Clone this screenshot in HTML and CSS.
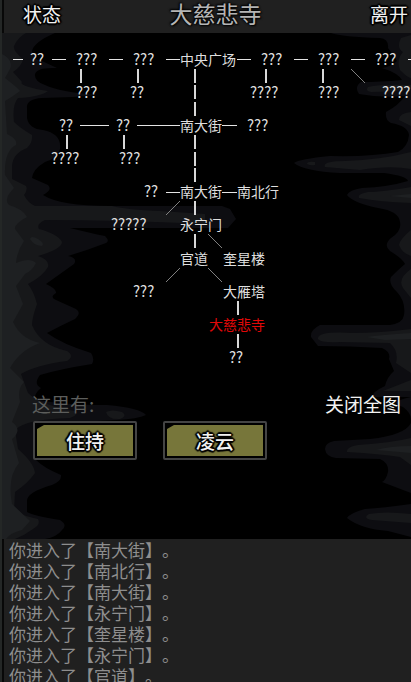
FILE: index.html
```html
<!DOCTYPE html>
<html lang="zh-CN">
<head>
    <meta charset="UTF-8">
    <meta name="viewport" content="width=device-width, initial-scale=1">
    <title>大慈悲寺</title>
    <link rel="stylesheet" href="styles.css">
</head>
<body>
    <header class="top-bar">
        <button class="text-button outlined">状态</button>
        <h1 class="place-name">大慈悲寺</h1>
        <button class="text-button outlined">离开</button>
    </header>

    <main class="scene">
        <!-- 左侧墨迹 -->
        <svg class="ink ink-left" width="240" height="506" viewBox="0 33 240 506" aria-hidden="true">
            <path class="ink-outer" d="M0 33H55Q34 42 32 51Q33 60 42 61L57 68Q37 67 35 74Q34 81 45 85Q60 92 97 95Q70 98 42 98Q26 99 27 108V118Q29 129 43 130Q62 134 60 149Q58 158 45 162Q33 169 32 178L48 185Q53 190 43 195Q60 206 110 206H222L230 209L236 219L228 228H70Q90 233 105 236Q110 241 106 243Q88 250 68 256Q78 258 74 264Q60 274 46 284Q57 289 56 293Q49 297 56 300L76 309Q82 313 75 319Q60 326 47 333Q62 344 91 353Q95 359 92 364Q60 369 40 375Q33 384 41 388Q34 394 35 399Q60 405 107 405Q140 408 146 415Q138 419 117 420Q50 422 37 432Q30 450 36 460Q44 468 61 475Q62 481 52 485Q27 492 27 501V512Q34 516 60 520Q68 525 62 530Q57 537 45 539H0Z"/>
            <path class="ink-mid" d="M0 33H26Q18 37 14 46Q13 51 23 59Q22 66 13 72L22 82Q18 86 48 91Q40 97 18 98Q12 105 14 122Q20 128 32 135Q33 142 27 148Q13 153 12 166V179L26 186Q28 190 24 195Q28 203 35 206H112Q128 210 160 211L205 214V224Q120 220 45 220Q36 224 39 229Q58 234 62 242Q62 249 38 256Q50 260 48 267Q43 276 28 284Q34 292 37 304Q32 318 32 325Q40 345 67 351Q75 356 67 361Q36 365 21 374L28 393Q40 405 75 411Q79 415 70 418Q25 419 15 430L18 449Q34 463 35 473Q28 483 15 492L14 512Q28 517 38 519Q41 525 33 529Q25 535 15 539H0Z"/>
            <path class="ink-inner" d="M0 53Q14 59 10 69L5 78Q19 89 20 91Q12 97 5 101L7 134Q18 139 16 145Q4 151 5 175L14 188Q3 199 9 205Q23 209 27 217Q14 224 15 229L24 241Q17 251 16 263Q30 257 36 263Q32 271 25 274L16 286L23 304L13 322Q21 339 40 343Q20 350 10 368L24 382Q17 389 20 402L12 422Q23 430 12 439L19 463Q7 477 12 504L30 521L22 530Q10 533 6 539H0Z"/>
            <path class="ink-inner" d="M30 239Q31 235 38 239Q45 243 42 246Q34 246 30 239Z"/>
            <path class="ink-mid" d="M106 412Q112 409 122 412Q128 416 120 419Q108 420 106 412Z"/>
            <path class="ink-edge" d="M0 33H2V539H0Z"/>
        </svg>
        <!-- 右侧墨迹 -->
        <svg class="ink ink-right" width="121" height="506" viewBox="290 33 121 506" aria-hidden="true">
            <path class="ink-outer" d="M411 33H331Q342 37 380 38Q389 39 388 48Q393 54 397 61Q390 67 382 68Q398 73 402 80Q380 82 361 82Q354 87 359 94Q380 98 405 96Q399 105 386 112Q385 120 391 123Q408 126 409 135Q408 147 398 152Q370 157 330 156Q299 159 294 163Q304 171 340 173H384Q407 176 408 181Q388 187 362 188Q349 190 347 195Q353 203 378 208Q399 211 400 222Q402 231 391 238Q383 245 390 251Q403 259 405 264Q399 269 391 277Q388 284 397 292Q406 302 404 315Q403 323 390 325H320Q310 330 311 337L318 346Q350 346 382 348Q391 352 389 359L394 371Q387 377 385 386Q372 392 372 397H411Z"/>
            <path class="ink-outer" d="M411 397Q387 402 403 407Q411 413 411 419ZM411 423Q405 435 370 439L334 441Q325 443 325 449Q326 457 336 458L380 459Q389 463 388 472Q386 480 382 482L411 493ZM411 504Q383 508 365 509Q350 513 347 518Q361 529 388 531L411 537Z"/>
            <path class="ink-mid" d="M411 35L401 38Q396 48 403 52Q396 60 400 70Q408 78 411 78ZM411 85Q380 84 368 87Q365 91 371 92Q390 92 411 89ZM411 112Q399 113 399 120L411 126ZM411 152Q380 160 345 161Q322 161 325 167L360 170Q390 165 411 169ZM411 187Q382 192 368 192Q357 194 359 198Q380 202 411 203ZM411 230Q400 239 399 245Q402 253 411 256ZM411 269Q397 279 403 288L411 298ZM411 329Q380 333 352 333Q317 331 318 339Q321 343 340 342L390 343Q399 351 396 363L411 373ZM411 380L383 391L411 391ZM411 438Q390 443 358 445Q346 447 347 452Q380 454 400 457L411 465ZM411 514Q385 511 369 514Q362 518 372 520L411 523Z"/>
            <path class="ink-inner" d="M411 194L390 196L411 198ZM411 333Q380 335 367 337L385 340L411 339ZM411 446Q390 446 376 450L411 453Z"/>
            <path class="ink-mid" d="M315 162Q307 161 307 164Q311 166 315 165Z"/>
        </svg>

        <svg class="map" width="440" height="340" role="img" aria-label="地图">
            <!-- 横向道路 -->
            <path class="road" d="M13 26.5H23M52 26.5H66M109 26.5H123M166 26.5H180M237 26.5H251M294 26.5H308M351 26.5H365M408 26.5H422"/>
            <path class="road" d="M80 92.5H109M137 92.5H180M222 92.5H237"/>
            <path class="road" d="M166 159.5H180M222 159.5H237"/>
            <!-- 纵向道路 -->
            <path class="road-v" d="M81 36V50M138 36V50M195 36V50M195 52V66M195 69V83M266 36V50M323 36V50"/>
            <path class="road-v" d="M67 102V116M124 102V116M195 102V116M195 119V133M195 135V149"/>
            <path class="road-v" d="M195 168V182M195 201V215M238 268V282M238 301V315"/>
            <!-- 小路 -->
            <path class="trail" d="M351 36L365 50M180 168L166 182M208 201L222 215M180 235L166 249M208 235L222 249"/>

            <g class="unknown">
                <text x="30" y="32">??</text>
                <text x="76" y="32">???</text>
                <text x="133" y="32">???</text>
                <text x="261" y="32">???</text>
                <text x="318" y="32">???</text>
                <text x="375" y="32">???</text>
                <text x="76" y="65">???</text>
                <text x="130" y="65">??</text>
                <text x="250" y="65">????</text>
                <text x="318" y="65">???</text>
                <text x="382" y="65">????</text>
                <text x="59" y="98">??</text>
                <text x="116" y="98">??</text>
                <text x="247" y="98">???</text>
                <text x="51" y="131">????</text>
                <text x="119" y="131">???</text>
                <text x="144" y="164">??</text>
                <text x="111" y="197">?????</text>
                <text x="133" y="264">???</text>
                <text x="229" y="330">??</text>
            </g>
            <g class="known">
                <text x="180" y="32">中央广场</text>
                <text x="180" y="98">南大街</text>
                <text x="180" y="164">南大街</text>
                <text x="237" y="164">南北行</text>
                <text x="180" y="197">永宁门</text>
                <text x="180" y="231">官道</text>
                <text x="223" y="231">奎星楼</text>
                <text x="223" y="264">大雁塔</text>
                <text class="here" x="209" y="297">大慈悲寺</text>
            </g>
        </svg>

        <div class="people-head">
            <h2 class="people-label">这里有:</h2>
            <button class="text-button">关闭全图</button>
        </div>
        <div class="people">
            <button class="person"><span class="person-name outlined">住持</span></button>
            <button class="person"><span class="person-name outlined">凌云</span></button>
        </div>
    </main>

    <section class="log">
        <p>你进入了【南大街】。</p>
        <p>你进入了【南北行】。</p>
        <p>你进入了【南大街】。</p>
        <p>你进入了【永宁门】。</p>
        <p>你进入了【奎星楼】。</p>
        <p>你进入了【永宁门】。</p>
        <p>你进入了【官道】。</p>
    </section>
</body>
</html>
```

FILE: styles.css
```css
* {
    box-sizing: border-box;
}
body {
    display: flex;
    flex-direction: column;
    height: 100vh;
    margin: 0;
    overflow: hidden;
    background-color: #000;
    color: #f2f2f2;
    font-family: "Noto Sans CJK SC", sans-serif;
    text-spacing-trim: space-all;
}
h1, h2, p {
    margin: 0;
    font-weight: normal;
}
button {
    padding: 0;
    border: none;
    background: none;
    color: inherit;
    font-family: inherit;
    cursor: pointer;
}
.outlined {
    text-shadow: -1px -1px 1px #000, 1px -1px 1px #000, -1px 1px 1px #000, 1px 1px 1px #000,
        0 2px 1px #000, 0 -2px 1px #000, 2px 0 1px #000, -2px 0 1px #000;
}
.text-button {
    font-size: 19px;
    line-height: 28px;
}

/* 顶栏 */
.top-bar {
    display: flex;
    flex: none;
    align-items: flex-start;
    justify-content: space-between;
    height: 33px;
    padding: 0 3px 0 21px;
    border-left: 2px solid #242726;
    background-color: #202020;
    box-shadow: inset 2px 0 #080808;
}
.place-name {
    color: #b4b4b4;
    font-size: 23px;
    line-height: 27px;
    text-shadow: 0 0 2px #000, 1px 1px 2px #000, -1px -1px 2px #000;
}

/* 场景 */
.scene {
    position: relative;
    flex: none;
    height: 506px;
    overflow: hidden;
}
.ink {
    position: absolute;
    top: 0;
}
.ink-left {
    left: 0;
}
.ink-right {
    right: 0;
}
.ink-outer {
    fill: #0d0d11;
}
.ink-mid {
    fill: #17181a;
}
.ink-inner {
    fill: #1e2022;
}
.ink-edge {
    fill: #242726;
}

/* 地图 */
.map {
    position: relative;
    display: block;
}
.map text {
    fill: #dedede;
    font-size: 14px;
}
.map .unknown text {
    font-size: 15px;
}
.map .here {
    fill: #e00808;
}
.road {
    stroke: #e4e4e4;
    stroke-width: 1;
}
.road-v {
    stroke: #d8d8d8;
    stroke-width: 2;
}
.trail {
    stroke: #808080;
    stroke-width: 1;
}

/* 人物 */
.people-head {
    position: relative;
    display: flex;
    justify-content: space-between;
    padding: 17px 10px 0 32px;
}
.people-label {
    color: #5c5e5c;
    font-size: 19px;
    line-height: 28px;
}
.people {
    position: relative;
    display: flex;
    gap: 26px;
    padding: 3px 33px;
}
.person {
    width: 104px;
    height: 39px;
    padding: 2px;
    border: 2px solid #444;
    border-radius: 2px;
    background-color: #000;
}
.person-name {
    display: block;
    height: 31px;
    background-color: #77763a;
    clip-path: polygon(7px 0, 100% 0, 100% 100%, 0 100%, 0 4px);
    font-size: 19px;
    font-weight: 500;
    line-height: 31px;
}

/* 消息 */
.log {
    flex: 1;
    min-height: 0;
    overflow: hidden;
    padding-left: 7px;
    border-left: 2px solid #242726;
    background-color: #202020;
    box-shadow: inset 2px 0 #080808;
    color: #8e8e8e;
    font-size: 17px;
    line-height: 21px;
}
```
